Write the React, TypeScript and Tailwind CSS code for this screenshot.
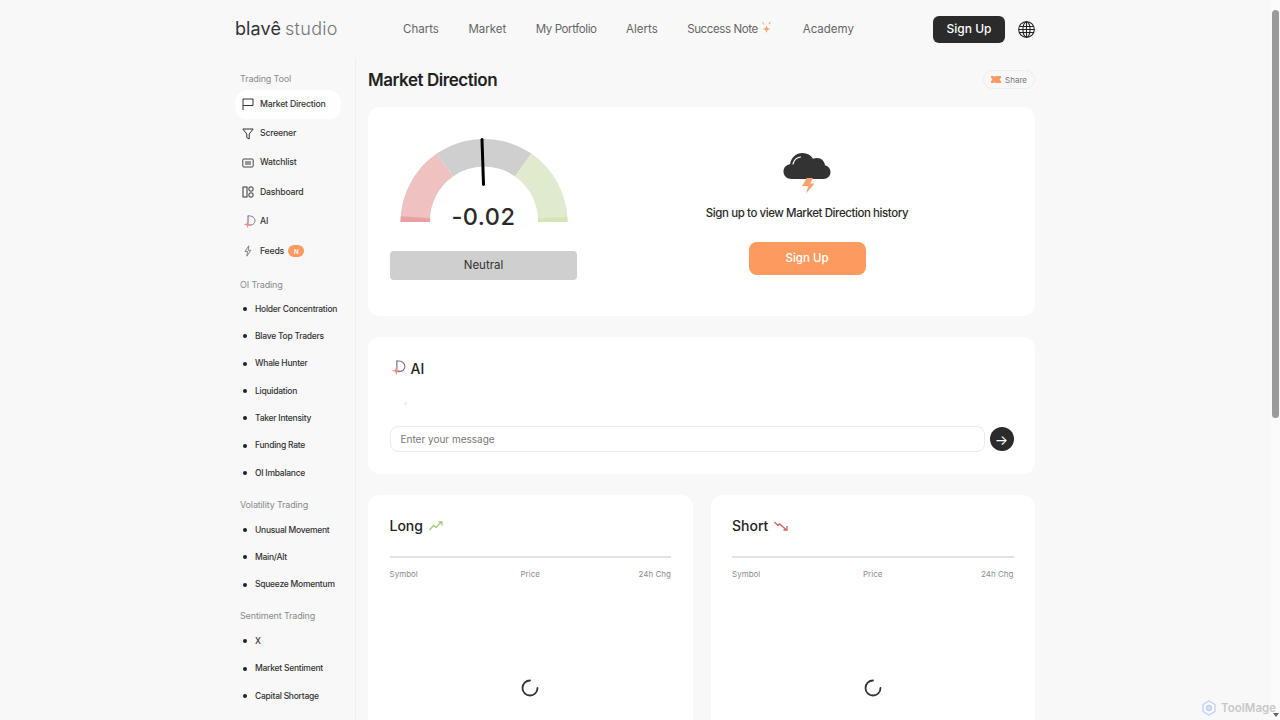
const sans = "font-['Inter','Liberation_Sans',sans-serif]";

const oiLinks = ["Holder Concentration", "Blave Top Traders", "Whale Hunter", "Liquidation", "Taker Intensity", "Funding Rate", "OI Imbalance"];
const volLinks = ["Unusual Movement", "Main/Alt", "Squeeze Momentum"];
const sentLinks = ["X", "Market Sentiment", "Capital Shortage"];

function FlagIcon() {
  return (
    <svg width="12" height="12" viewBox="0 0 12 12" fill="none" stroke="#333" strokeWidth="1">
      <path d="M1 12V1h10v6.500H1" />
    </svg>
  );
}

function FunnelIcon() {
  return (
    <svg width="12" height="12" viewBox="0 0 12 12" fill="none" stroke="#333" strokeWidth="1" strokeLinejoin="round">
      <path d="M0.800 1h10.400L7.200 6v5L4.800 9.600V6z" />
    </svg>
  );
}

function WatchIcon() {
  return (
    <svg width="12" height="12" viewBox="0 0 12 12" fill="none" stroke="#333" strokeWidth="0.9">
      <rect x="0.800" y="2" width="10.400" height="8" rx="1" />
      <rect x="3" y="4" width="6" height="4" fill="#999" stroke="none" />
    </svg>
  );
}

function BoardIcon() {
  return (
    <svg width="12" height="12" viewBox="0 0 12 12" fill="none" stroke="#333" strokeWidth="1">
      <rect x="1" y="1" width="4" height="10" />
      <rect x="7" y="1" width="4" height="4" rx="1" />
      <rect x="7" y="7" width="4" height="4" rx="1" />
    </svg>
  );
}

function AiIcon({ size = 14 }: { size?: number }) {
  return (
    <svg width={size} height={size} viewBox="0 0 14 14" fill="none">
      <path d="M6 1c4-.6 7 1.700 7 4.700 0 2.900-2.800 4.800-6.500 4.500" stroke="#8b6f9e" strokeWidth="1" />
      <path d="M6 0.500V8" stroke="#7d5f98" strokeWidth="1" />
      <path d="M5.500 5.500l.9 3 3 .9-3 .9-.9 3-.9-3-3-.9 3-.9z" fill="#ea8f8a" />
    </svg>
  );
}

function BoltIcon() {
  return (
    <svg width="12" height="12" viewBox="0 0 12 12" fill="none" stroke="#777" strokeWidth="0.9" strokeLinejoin="round">
      <path d="M6.800 0.800 3 6.500h2.600L4.800 11.200 8.800 5.300H6.200z" />
    </svg>
  );
}

function Spark() {
  return (
    <svg width="11" height="13" viewBox="0 0 11 13" fill="#f5a06b">
      <path d="M5.500 4.500l1 2.600 2.800 1-2.800 1-1 2.900-1-2.900-2.800-1 2.800-1z" />
      <path d="M2 1l1.400 2.300-.8.500L1.200 1.500zM8.800.8l.9.5-1.300 2.300-.8-.5z" />
    </svg>
  );
}

function GlobeIcon() {
  return (
    <svg width="17" height="17" viewBox="0 0 17 17" fill="none" stroke="#222" strokeWidth="1.100">
      <circle cx="8.500" cy="8.500" r="7.800" />
      <ellipse cx="8.500" cy="8.500" rx="3.600" ry="7.800" />
      <path d="M8.500 0.700V16.300M1.400 5.500H15.600M0.700 8.500H16.300M1.400 11.500H15.600" />
    </svg>
  );
}

function Ticket() {
  return (
    <svg width="10" height="7" viewBox="0 0 10 7" fill="#f59a63">
      <path d="M0 0h3v.8h1V0h6v2.200a1.300 1.300 0 0 0 0 2.600V7H4v-.8H3V7H0V4.800a1.300 1.300 0 0 0 0-2.600z" />
    </svg>
  );
}

function Spinner() {
  return (
    <svg width="20" height="20" viewBox="0 0 20 20" fill="none" stroke="#333" strokeWidth="1.800" strokeLinecap="round">
      <path d="M10 2.500A7.500 7.500 0 1 0 17.500 10" />
    </svg>
  );
}

function Gauge() {
  return (
    <svg width="170" height="90" viewBox="0 0 170 90">
      <path d="M1.500 84A83.500 83.500 0 0 1 37.700 15.600L54 38.400A54 54 0 0 0 31 84z" fill="#efc1c1" />
      <path d="M1.500 84A83.500 83.500 0 0 1 1.700 78.200L31.100 80.200A54 54 0 0 0 31 84z" fill="#e8a0a2" />
      <path d="M37.700 15.600A83.500 83.500 0 0 1 132.300 15.600L116 38.400A54 54 0 0 0 54 38.400z" fill="#cfcfcf" />
      <path d="M132.300 15.600A83.500 83.500 0 0 1 168.500 84H139A54 54 0 0 0 116 38.400z" fill="#e0eacf" />
      <path d="M168.500 84H139A54 54 0 0 0 138.900 80.500L168.400 78.500A83.500 83.500 0 0 1 168.500 84z" fill="#d2e5b6" />
      <path d="M83 1.500 84.500 46.500" stroke="#000" strokeWidth="3" strokeLinecap="round" />
    </svg>
  );
}

function Cloud() {
  return (
    <svg width="48" height="42" viewBox="0 0 48 42">
      <path d="M9 27C3.500 27 0.500 23.500 0.500 19.500 0.500 15.500 3.500 12.700 7 12.300 8 5.800 13 1 19.500 1 24.200 1 27.800 3.200 30 6.800 31.200 6.200 32.500 6 34 6 38.500 6 41.500 9.200 42 13.300 45.500 14.200 47.500 16.800 47.500 20.300 47.500 24 44.500 27 40.500 27z" fill="#333" />
      <path d="M10 12C11 8 14 5.500 17.500 5" stroke="#fff" strokeWidth="1.200" fill="none" strokeLinecap="round" />
      <path d="M23.500 26H30L27.300 31.500H31.500L23 41.500 25.300 34H18.800L22.300 29z" fill="#f7a26e" />
    </svg>
  );
}

function SectionTitle({ children, className }: { children: string; className?: string }) {
  return <p className={`pl-[5px] text-[9px] leading-[12px] tracking-[-0.15px] text-[#8a8a8a] ${className ?? ""}`}>{children}</p>;
}

function ToolItem({ icon, label, active, badge }: { icon: React.ReactNode; label: string; active?: boolean; badge?: boolean }) {
  return (
    <div className={`flex h-[29.4px] items-center whitespace-nowrap rounded-xl pl-[7px] text-[8.700px] font-medium tracking-[-0.2px] text-[#333] ${active ? "bg-white" : ""}`}>
      <span className="flex w-[18px] shrink-0">{icon}</span>
      {label}
      {badge && (
        <span className="ml-[4px] flex h-[12px] w-[16px] items-center justify-center rounded-full bg-[#fb9a63] text-[6px] font-semibold text-white">N</span>
      )}
    </div>
  );
}

function DotLinks({ items }: { items: string[] }) {
  return (
    <div className="flex flex-col">
      {items.map((t) => (
        <div key={t} className="flex h-[27.35px] items-center whitespace-nowrap pl-[8px] text-[8.500px] font-medium tracking-[-0.25px] text-[#333]">
          <span className="mr-[8px] h-[4px] w-[4px] shrink-0 rounded-full bg-[#222]" />
          {t}
        </div>
      ))}
    </div>
  );
}

function TableCard({ title, icon }: { title: string; icon: React.ReactNode }) {
  return (
    <div className="h-[260px] flex-1 rounded-xl bg-white px-[21.500px] pt-[21px]">
      <div className="flex h-[19px] items-center gap-[6px] text-[14px] font-medium text-[#222]">
        {title}
        {icon}
      </div>
      <div className="mt-[21px] h-[1.500px] bg-[#e3e3e3]" />
      <div className="mt-[10px] flex justify-between text-[8px] leading-[12px] text-[#8c8c8c]">
        <span>Symbol</span>
        <span className="ml-[4px]">Price</span>
        <span>24h Chg</span>
      </div>
      <div className="mt-[98px] flex justify-center">
        <Spinner />
      </div>
    </div>
  );
}

export default function App() {
  return (
    <div className={`relative flex h-screen overflow-hidden bg-[#f8f8f8] ${sans}`}>
      <div className="flex-1 overflow-hidden">
        <div className="ml-[235px] w-[800px]">
          <header className="flex h-[58px] items-center">
            <div className="flex w-[168px] items-baseline gap-[4px] text-[18px] leading-none">
              <span className="font-normal tracking-[0.1px] text-[#333]">blavê</span>
              <span className="font-light tracking-[0.3px] text-[#777]">studio</span>
            </div>
            <nav className="flex items-center pt-[1px] text-[11.500px] text-[#666]">
              <span className="mr-[29.500px]">Charts</span>
              <span className="mr-[29.500px]">Market</span>
              <span className="mr-[29.500px] tracking-[-0.4px]">My Portfolio</span>
              <span className="mr-[29.500px]">Alerts</span>
              <span className="flex items-start gap-[3px] tracking-[-0.4px]">
                Success Note
                <Spark />
              </span>
              <span className="ml-[31px]">Academy</span>
            </nav>
            <div className="ml-auto flex items-center gap-[13px]">
              <button className="flex h-[27px] w-[72px] items-center justify-center rounded-md bg-[#2b2b2b] text-[12px] font-medium text-white">Sign Up</button>
              <GlobeIcon />
            </div>
          </header>

          <div className="flex">
            <aside className="h-[700px] w-[121px] shrink-0 border-r border-[#efefef] pr-[14px] pt-[14.500px]">
              <SectionTitle>Trading Tool</SectionTitle>
              <div className="mt-[5px]">
                <ToolItem icon={<FlagIcon />} label="Market Direction" active />
                <ToolItem icon={<FunnelIcon />} label="Screener" />
                <ToolItem icon={<WatchIcon />} label="Watchlist" />
                <ToolItem icon={<BoardIcon />} label="Dashboard" />
                <ToolItem icon={<AiIcon />} label="AI" />
                <ToolItem icon={<BoltIcon />} label="Feeds" badge />
              </div>
              <SectionTitle className="mt-[13px]">OI Trading</SectionTitle>
              <div className="mt-[4.500px]"><DotLinks items={oiLinks} /></div>
              <SectionTitle className="mt-[12.500px]">Volatility Trading</SectionTitle>
              <div className="mt-[5px]"><DotLinks items={volLinks} /></div>
              <SectionTitle className="mt-[12px]">Sentiment Trading</SectionTitle>
              <div className="mt-[5.500px]"><DotLinks items={sentLinks} /></div>
            </aside>

            <main className="flex-1 pl-[12px]">
              <div className="flex h-[49px] items-start justify-between pt-[11px]">
                <h1 className="text-[17px] font-semibold leading-[22px] tracking-[-0.45px] text-[#222]">Market Direction</h1>
                <div className="mt-[1px] flex h-[19px] w-[52px] items-center justify-center gap-[4px] rounded-full border border-[#eeeeee] text-[8px] text-[#777]">
                  <Ticket />
                  Share
                </div>
              </div>

              <section className="flex h-[209px] rounded-xl bg-white">
                <div className="w-[229px] shrink-0 pl-[22px] pt-[31px]">
                  <div className="relative ml-[8.500px] h-[90px] w-[170px]">
                    <Gauge />
                    <span className="absolute bottom-[-4px] left-0 right-0 text-center text-[23.500px] font-medium leading-[30px] tracking-[0.5px] text-[#2b2b2b]">-0.02</span>
                  </div>
                  <div className="mt-[23px] flex h-[29px] w-[187px] items-center justify-center rounded bg-[#cfcfcf] pt-[1px] text-[11.500px] text-[#333]">Neutral</div>
                </div>
                <div className="flex flex-1 flex-col items-center pr-[18px] pt-[45px]">
                  <Cloud />
                  <p className="mt-[11px] text-[11.500px] font-medium leading-[16px] tracking-[-0.42px] text-[#2b2b2b]">Sign up to view Market Direction history</p>
                  <button className="mt-[21px] flex h-[33px] w-[117px] items-center justify-center rounded-lg bg-[#fc9a5f] text-[11.500px] font-medium text-white">Sign Up</button>
                </div>
              </section>

              <section className="mt-[21px] h-[137px] rounded-xl bg-white px-[21.500px] pt-[21px]">
                <div className="flex h-[20px] items-center gap-[5px] text-[14px] font-medium text-[#222]">
                  <AiIcon size={16} />
                  AI
                </div>
                <div className="ml-[14px] mt-[24px] h-[3px] w-[3px] rounded-full bg-[#eeeeee]" />
                <div className="mt-[21px] flex items-center gap-[5px]">
                  <div className="flex h-[26px] flex-1 items-center rounded-lg border border-[#ebebeb] pl-[10px] text-[10px] text-[#777]">Enter your message</div>
                  <button className="flex h-[24px] w-[24px] shrink-0 items-center justify-center rounded-full bg-[#2b2b2b] text-[14px] text-white">→</button>
                </div>
              </section>

              <div className="mt-[21px] flex gap-[18px]">
                <TableCard
                  title="Long"
                  icon={
                    <svg width="14" height="10" viewBox="0 0 14 10" fill="none" stroke="#a5cc7c" strokeWidth="1.300">
                      <path d="M0.500 9 4.500 4.500 7 6.500 12 1.500M9.500 1H13V4.500" />
                    </svg>
                  }
                />
                <TableCard
                  title="Short"
                  icon={
                    <svg width="14" height="10" viewBox="0 0 14 10" fill="none" stroke="#d2615f" strokeWidth="1.300">
                      <path d="M0.500 1 4 4.500 5.500 3 12 8.500M13 5V9H9.500" />
                    </svg>
                  }
                />
              </div>
            </main>
          </div>
        </div>
      </div>

      <div className="flex w-[9px] shrink-0 flex-col justify-between bg-[#fbfbfb] pb-[3px] pt-[10px]">
        <div className="mx-auto h-[408px] w-[7px] rounded-full bg-[#9a9a9a]" />
        <div className="mx-auto h-0 w-0 border-x-[3px] border-t-[4px] border-x-transparent border-t-[#666]" />
      </div>

      <div className="absolute bottom-[3px] right-[4px] flex items-center gap-[4px] text-[11.500px] font-semibold text-[#c8c8c8]">
        <svg width="16" height="16" viewBox="0 0 16 16" fill="none" stroke="#bcd0ef" strokeWidth="1.300">
          <path d="M8 1l6 3.500v7L8 15l-6-3.500v-7z" />
          <circle cx="8" cy="8" r="2.500" fill="#d5e2f6" />
        </svg>
        ToolMage
      </div>
    </div>
  );
}
